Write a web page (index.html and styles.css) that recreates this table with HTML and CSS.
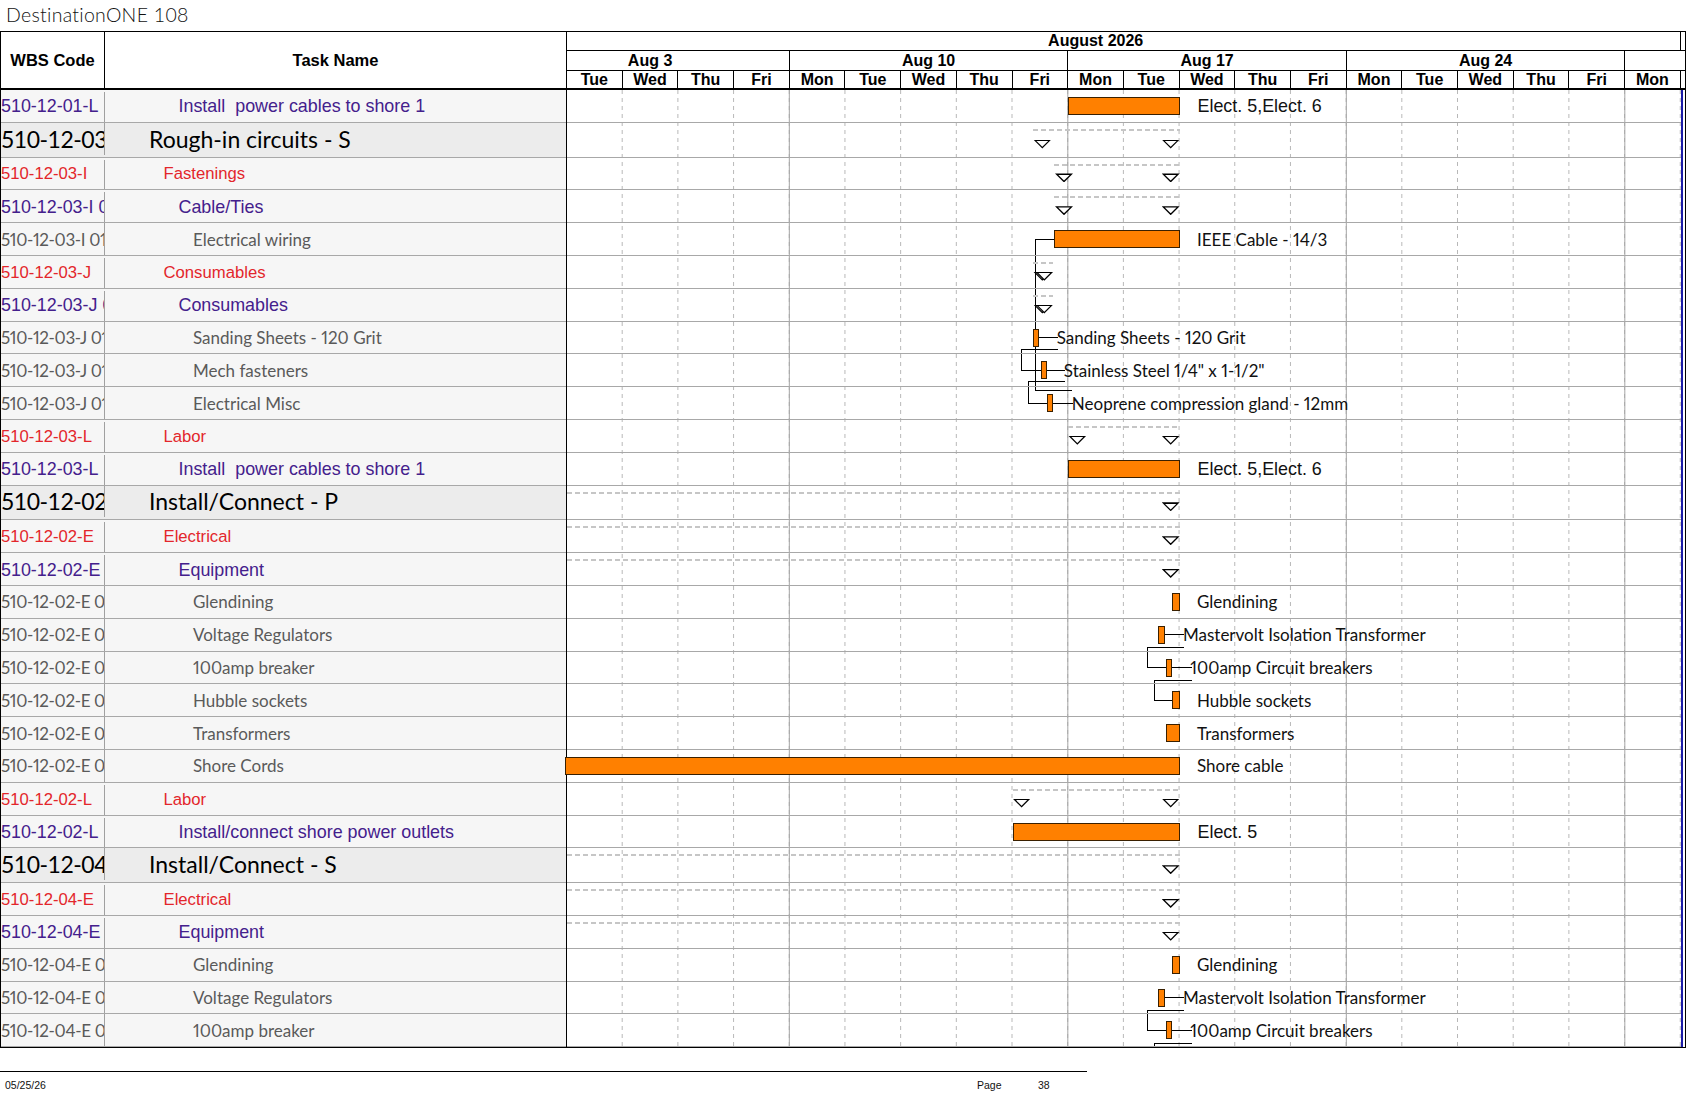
FILE: index.html
```html
<!DOCTYPE html>
<html>
<head>
<meta charset="utf-8">
<title>DestinationONE 108</title>
<link rel="stylesheet" href="styles.css">
</head>
<body>
<div class="title">DestinationONE 108</div>
<div class="sheet">
  <div class="tbl">
    <div class="thead">
      <div class="th wbs-h">WBS Code</div>
      <div class="th task-h">Task Name</div>
    </div>
    <div class="row l3"><div class="wbs">510-12-01-L</div><div class="name">Install  power cables to shore 1</div></div>
    <div class="row l1"><div class="wbs">510-12-03</div><div class="name">Rough-in circuits - S</div></div>
    <div class="row l2"><div class="wbs">510-12-03-I</div><div class="name">Fastenings</div></div>
    <div class="row l3"><div class="wbs">510-12-03-I 01</div><div class="name">Cable/Ties</div></div>
    <div class="row l4"><div class="wbs">510-12-03-I 01 01</div><div class="name">Electrical wiring</div></div>
    <div class="row l2"><div class="wbs">510-12-03-J</div><div class="name">Consumables</div></div>
    <div class="row l3"><div class="wbs">510-12-03-J 01</div><div class="name">Consumables</div></div>
    <div class="row l4"><div class="wbs">510-12-03-J 01 01</div><div class="name">Sanding Sheets - 120 Grit</div></div>
    <div class="row l4"><div class="wbs">510-12-03-J 01 02</div><div class="name">Mech fasteners</div></div>
    <div class="row l4"><div class="wbs">510-12-03-J 01 03</div><div class="name">Electrical Misc</div></div>
    <div class="row l2"><div class="wbs">510-12-03-L</div><div class="name">Labor</div></div>
    <div class="row l3"><div class="wbs">510-12-03-L</div><div class="name">Install  power cables to shore 1</div></div>
    <div class="row l1"><div class="wbs">510-12-02</div><div class="name">Install/Connect - P</div></div>
    <div class="row l2"><div class="wbs">510-12-02-E</div><div class="name">Electrical</div></div>
    <div class="row l3"><div class="wbs">510-12-02-E</div><div class="name">Equipment</div></div>
    <div class="row l4"><div class="wbs">510-12-02-E 01 01</div><div class="name">Glendining</div></div>
    <div class="row l4"><div class="wbs">510-12-02-E 01 02</div><div class="name">Voltage Regulators</div></div>
    <div class="row l4"><div class="wbs">510-12-02-E 01 03</div><div class="name">100amp breaker</div></div>
    <div class="row l4"><div class="wbs">510-12-02-E 01 04</div><div class="name">Hubble sockets</div></div>
    <div class="row l4"><div class="wbs">510-12-02-E 01 05</div><div class="name">Transformers</div></div>
    <div class="row l4"><div class="wbs">510-12-02-E 01 06</div><div class="name">Shore Cords</div></div>
    <div class="row l2"><div class="wbs">510-12-02-L</div><div class="name">Labor</div></div>
    <div class="row l3"><div class="wbs">510-12-02-L</div><div class="name">Install/connect shore power outlets</div></div>
    <div class="row l1"><div class="wbs">510-12-04</div><div class="name">Install/Connect - S</div></div>
    <div class="row l2"><div class="wbs">510-12-04-E</div><div class="name">Electrical</div></div>
    <div class="row l3"><div class="wbs">510-12-04-E</div><div class="name">Equipment</div></div>
    <div class="row l4"><div class="wbs">510-12-04-E 01 01</div><div class="name">Glendining</div></div>
    <div class="row l4"><div class="wbs">510-12-04-E 01 02</div><div class="name">Voltage Regulators</div></div>
    <div class="row l4"><div class="wbs">510-12-04-E 01 03</div><div class="name">100amp breaker</div></div>
  </div>

  <div class="chart">
    <div class="chead">
      <div class="track">
        <div class="months">
          <div class="month">August 2026</div>
          <div class="month">September 2026</div>
        </div>
        <div class="weeks">
          <div class="week">Aug 3</div>
          <div class="week">Aug 10</div>
          <div class="week">Aug 17</div>
          <div class="week">Aug 24</div>
          <div class="week">Aug 31</div>
        </div>
        <div class="days">
          <div class="day">Mon</div><div class="day">Tue</div><div class="day">Wed</div><div class="day">Thu</div><div class="day">Fri</div>
          <div class="day">Mon</div><div class="day">Tue</div><div class="day">Wed</div><div class="day">Thu</div><div class="day">Fri</div>
          <div class="day">Mon</div><div class="day">Tue</div><div class="day">Wed</div><div class="day">Thu</div><div class="day">Fri</div>
          <div class="day">Mon</div><div class="day">Tue</div><div class="day">Wed</div><div class="day">Thu</div><div class="day">Fri</div>
          <div class="day">Mon</div><div class="day">Tue</div>
        </div>
      </div>
    </div>

    <div class="cbody">
      <svg class="links" width="1114" height="958" viewBox="0 0 1114 958" shape-rendering="crispEdges">
        <g fill="none" stroke="#000" stroke-width="1">
          <path d="M487 149.3H468V300H504.7"/>
          <path d="M472.3 247.6H491"/>
          <path d="M491 259.3H454V280.4H473.7"/>
          <path d="M479.7 280.4H498"/>
          <path d="M498 291.7H461.3V313.2H480.3"/>
          <path d="M486.3 313.2H506"/>
          <path d="M597.5 544.8H617.3"/>
          <path d="M617.3 557.3H580.3V577.6H598.7"/>
          <path d="M605.2 577.6H624.7"/>
          <path d="M624.7 590.7H587.3V610.4H605.3"/>
          <path d="M597.5 907.6H617.3"/>
          <path d="M617.3 920.1H580.3V940.4H598.7"/>
          <path d="M605.2 940.4H624.7"/>
          <path d="M624.7 953H587.3V970"/>
        </g>
      </svg>

      <div class="crow"><div class="bar" style="left:501.3px;width:111.4px"></div><div class="lbl ar" style="left:630.5px">Elect. 5,Elect. 6</div></div>
      <div class="crow big"><div class="sum" style="left:466.3px;width:146.4px"></div><div class="tri" style="left:466.3px"></div><div class="tri" style="left:594.7px"></div></div>
      <div class="crow"><div class="sum" style="left:487px;width:125.7px"></div><div class="tri" style="left:488px"></div><div class="tri" style="left:594.7px"></div></div>
      <div class="crow"><div class="sum" style="left:487px;width:125.7px"></div><div class="tri" style="left:488px"></div><div class="tri" style="left:594.7px"></div></div>
      <div class="crow"><div class="bar" style="left:487px;width:125.7px"></div><div class="lbl" style="left:630px">IEEE Cable - 14/3</div></div>
      <div class="crow"><div class="sum" style="left:466.3px;width:20px"></div><div class="tri" style="left:466.3px"></div><div class="tri" style="left:468.3px"></div></div>
      <div class="crow"><div class="sum" style="left:466.3px;width:20px"></div><div class="tri" style="left:466.3px"></div><div class="tri" style="left:468.3px"></div></div>
      <div class="crow"><div class="bar" style="left:466.3px;width:6px"></div><div class="lbl" style="left:489.7px">Sanding Sheets - 120 Grit</div></div>
      <div class="crow"><div class="bar" style="left:473.7px;width:6px"></div><div class="lbl" style="left:496.8px">Stainless Steel 1/4" x 1-1/2"</div></div>
      <div class="crow"><div class="bar" style="left:480.3px;width:6px"></div><div class="lbl" style="left:504.8px">Neoprene compression gland - 12mm</div></div>
      <div class="crow"><div class="sum" style="left:501.3px;width:111.4px"></div><div class="tri" style="left:501.3px"></div><div class="tri" style="left:594.7px"></div></div>
      <div class="crow"><div class="bar" style="left:501.3px;width:111.4px"></div><div class="lbl ar" style="left:630.5px">Elect. 5,Elect. 6</div></div>
      <div class="crow big"><div class="sum" style="left:0;width:612.7px"></div><div class="tri" style="left:594.7px"></div></div>
      <div class="crow"><div class="sum" style="left:0;width:612.7px"></div><div class="tri" style="left:594.7px"></div></div>
      <div class="crow"><div class="sum" style="left:0;width:612.7px"></div><div class="tri" style="left:594.7px"></div></div>
      <div class="crow"><div class="bar" style="left:605.3px;width:7.4px"></div><div class="lbl" style="left:630px">Glendining</div></div>
      <div class="crow"><div class="bar" style="left:591px;width:6.5px"></div><div class="lbl" style="left:616px">Mastervolt Isolation Transformer</div></div>
      <div class="crow"><div class="bar" style="left:598.7px;width:6.5px"></div><div class="lbl" style="left:623.3px">100amp Circuit breakers</div></div>
      <div class="crow"><div class="bar" style="left:605.3px;width:7.4px"></div><div class="lbl" style="left:630px">Hubble sockets</div></div>
      <div class="crow"><div class="bar" style="left:598.7px;width:14px"></div><div class="lbl" style="left:630px">Transformers</div></div>
      <div class="crow"><div class="bar" style="left:-2px;width:614.7px"></div><div class="lbl" style="left:630px">Shore cable</div></div>
      <div class="crow"><div class="sum" style="left:445.6px;width:167.1px"></div><div class="tri" style="left:445.6px"></div><div class="tri" style="left:594.7px"></div></div>
      <div class="crow"><div class="bar" style="left:445.6px;width:167.1px"></div><div class="lbl ar" style="left:630.5px">Elect. 5</div></div>
      <div class="crow big"><div class="sum" style="left:0;width:612.7px"></div><div class="tri" style="left:594.7px"></div></div>
      <div class="crow"><div class="sum" style="left:0;width:612.7px"></div><div class="tri" style="left:594.7px"></div></div>
      <div class="crow"><div class="sum" style="left:0;width:612.7px"></div><div class="tri" style="left:594.7px"></div></div>
      <div class="crow"><div class="bar" style="left:605.3px;width:7.4px"></div><div class="lbl" style="left:630px">Glendining</div></div>
      <div class="crow"><div class="bar" style="left:591px;width:6.5px"></div><div class="lbl" style="left:616px">Mastervolt Isolation Transformer</div></div>
      <div class="crow"><div class="bar" style="left:598.7px;width:6.5px"></div><div class="lbl" style="left:623.3px">100amp Circuit breakers</div></div>
    </div>
  </div>
</div>
<div class="footer">
  <div class="fdate">05/25/26</div>
  <div class="fpage">Page</div>
  <div class="fnum">38</div>
</div>
</body>
</html>
```
FILE: styles.css
```css
* { box-sizing: border-box; }

html, body {
  margin: 0;
  padding: 0;
  background: #fff;
  overflow: hidden;
}

body {
  font-family: "Liberation Sans", Arial, sans-serif;
  color: #000;
  width: 1687px;
  height: 1097px;
}

.title {
  height: 31px;
  padding: 3px 0 0 6px;
  font-family: Lato, "Liberation Sans", sans-serif;
  font-weight: 300;
  font-size: 19.5px;
  line-height: 24px;
  letter-spacing: 0.3px;
  color: #111;
}

.sheet {
  display: flex;
  width: 1686px;
  border: 1px solid #000;
}

/* ---------- left table ---------- */
.tbl {
  width: 566px;
  flex: none;
  border-right: 1px solid #000;
}

.thead {
  display: flex;
  height: 58px;
  border-bottom: 2px solid #000;
}

.th {
  display: flex;
  align-items: center;
  justify-content: center;
  font-weight: bold;
  font-size: 16.5px;
}

.wbs-h {
  width: 104px;
  border-right: 1px solid #000;
}

.task-h {
  flex: 1;
}

.row {
  display: flex;
  height: 32.8px;
  border-bottom: 1px solid #a8a8a8;
  background: #f6f6f6;
  white-space: pre;
}

.wbs {
  width: 104px;
  flex: none;
  overflow: hidden;
  border-right: 1px solid #a0a0a0;
  display: flex;
  align-items: center;
}

.name {
  flex: 1;
  overflow: hidden;
  display: flex;
  align-items: center;
}

.l1 {
  height: 34.8px;
  padding-bottom: 2px;
  background: #ececec;
  font-family: Lato, "Liberation Sans", sans-serif;
  font-size: 23px;
  color: #000;
}
.l1 .wbs { letter-spacing: -0.5px; }
.l1 .name { padding-left: 44px; }

.l2 {
  padding-top: 2px;
  font-size: 16.7px;
  color: #e3262b;
}
.l2 .name { padding-left: 58.5px; }

.l3 {
  padding-top: 2px;
  font-size: 17.9px;
  color: #44208c;
}
.l3 .name { padding-left: 73.5px; }

.l4 {
  font-family: Lato, "Liberation Sans", sans-serif;
  font-size: 17px;
  font-variant-numeric: proportional-nums;
  color: #5a5a5a;
}
.l4 .wbs { letter-spacing: -0.35px; }
.l4 .name { padding-left: 88px; }

/* ---------- chart ---------- */
.chart {
  flex: 1;
  min-width: 0;
}

.chead {
  height: 58px;
  overflow: hidden;
  border-bottom: 2px solid #000;
}

.track {
  margin-left: -55.7px;
  width: 1400px;
  font-weight: bold;
  font-size: 16px;
}

.months {
  display: flex;
  height: 19px;
  border-bottom: 1px solid #000;
}

.month {
  flex: none;
  width: 1169.7px;
  border-right: 1px solid #000;
  text-align: center;
  line-height: 18px;
}

.weeks {
  display: flex;
  height: 20px;
  border-bottom: 1px solid #000;
}

.week {
  flex: none;
  width: 278.5px;
  border-right: 1px solid #000;
  text-align: center;
  line-height: 19px;
}

.days {
  display: flex;
  height: 17px;
}

.day {
  flex: none;
  width: 55.7px;
  border-right: 1px solid #000;
  text-align: center;
  line-height: 17px;
}

.cbody {
  position: relative;
  width: 1116px;
  border-right: 2px solid #1c1ca8;
  background-color: #fff;
  background-image:
    linear-gradient(to right, transparent 277.5px, #a4a4a4 277.5px),
    conic-gradient(from 0deg at calc(100% - 1px) 4px, #b8b8b8 0deg 90deg, transparent 90deg);
  background-size: 278.5px 100%, 55.7px 8px;
  background-position: -55.7px 0, 0 0;
  background-repeat: repeat-x, repeat;
}

.links {
  position: absolute;
  left: 0;
  top: 0;
  overflow: hidden;
  pointer-events: none;
}

.crow {
  position: relative;
  height: 32.8px;
  border-bottom: 1px solid #a8a8a8;
}

.crow.big {
  height: 34.8px;
}

.bar {
  position: absolute;
  top: 7px;
  height: 18px;
  background: #ff8000;
  border: 1px solid #3a2000;
}

.lbl {
  position: absolute;
  top: 0;
  height: 100%;
  display: flex;
  align-items: center;
  white-space: nowrap;
  font-family: Lato, "Liberation Sans", sans-serif;
  font-size: 17px;
  font-variant-numeric: proportional-nums;
  color: #111;
}

.lbl.ar {
  padding-top: 2px;
  font-family: "Liberation Sans", Arial, sans-serif;
  font-size: 17.9px;
  font-variant-numeric: normal;
}

.sum {
  position: absolute;
  top: 6px;
  height: 2px;
  background: repeating-linear-gradient(to right, #c6c6c6 0 5px, transparent 5px 8px);
}

.tri {
  position: absolute;
  bottom: 7px;
  width: 18px;
  height: 9px;
  background: #000;
  clip-path: polygon(0 0, 100% 0, 50% 100%);
}

.big .tri {
  bottom: 8px;
}

.tri::after {
  content: "";
  position: absolute;
  top: 1.3px;
  left: 3.1px;
  right: 3.1px;
  bottom: 1.85px;
  background: #fff;
  clip-path: polygon(0 0, 100% 0, 50% 100%);
}

/* ---------- footer ---------- */
.footer {
  display: flex;
  width: 1087px;
  margin-top: 22.8px;
  border-top: 1px solid #000;
  padding-top: 7px;
  font-size: 10.5px;
  line-height: 13px;
  color: #111;
}

.fdate {
  flex: 1;
  padding-left: 5px;
}

.fpage {
  width: 61px;
}

.fnum {
  width: 49px;
}
```
